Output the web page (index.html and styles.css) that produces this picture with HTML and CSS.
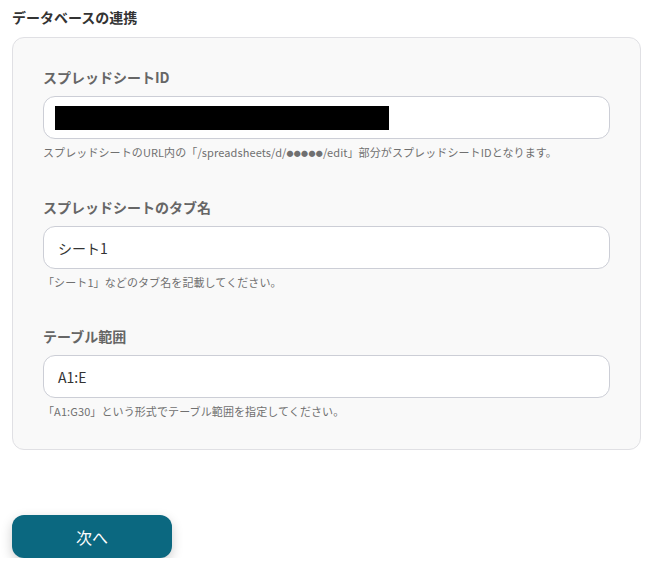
FILE: index.html
```html
<!DOCTYPE html>
<html lang="ja">
<head>
<meta charset="utf-8">
<link rel="stylesheet" href="styles.css">
</head>
<body>
<div class="page">
  <h2 class="title">データベースの連携</h2>
  <div class="card">
    <div class="field">
      <div class="label">スプレッドシートID</div>
      <div class="input"><span class="redact"></span></div>
      <div class="help">スプレッドシートのURL内の「/spreadsheets/d/<span class="dots">●●●●●</span>/edit」部分がスプレッドシートIDとなります。</div>
    </div>
    <div class="field">
      <div class="label">スプレッドシートのタブ名</div>
      <div class="input">シート1</div>
      <div class="help">「シート1」などのタブ名を記載してください。</div>
    </div>
    <div class="field">
      <div class="label">テーブル範囲</div>
      <div class="input">A1:E</div>
      <div class="help">「A1:G30」という形式でテーブル範囲を指定してください。</div>
    </div>
  </div>
  <button class="next">次へ</button>
</div>
</body>
</html>
```

FILE: styles.css
```css
* { box-sizing: border-box; }
html, body { margin: 0; padding: 0; background: #fff; }
body { font-family: "Noto Sans CJK JP", "Noto Sans", sans-serif; color: #333; }
.page { padding: 7px 13px 0 12px; }
.title {
  margin: 0 0 9px 0;
  font-size: 14px;
  line-height: 21px;
  font-weight: 700;
  color: #333;
}
.card {
  background: #f9f9f9;
  border: 1px solid #e0e0e4;
  border-radius: 12px;
  padding: 27px 30px 30px 30px;
  display: flex;
  flex-direction: column;
  gap: 34px;
}
.field { display: flex; flex-direction: column; }
.label {
  font-size: 14px;
  line-height: 24px;
  font-weight: 700;
  color: #666;
  margin-bottom: 7px;
}
.input {
  height: 43px;
  background: #fff;
  border: 1px solid #ccced6;
  border-radius: 12px;
  padding: 0 14px;
  display: flex;
  align-items: center;
  font-size: 14px;
  color: #333;
}
.redact {
  display: block;
  width: 334px;
  height: 24px;
  background: #000;
  margin-left: -3px;
}
.help {
  margin-top: 5px;
  font-size: 11px;
  line-height: 16px;
  color: #707070;
  letter-spacing: 0.1px;
}
.dots {
  font-size: 7px;
  letter-spacing: 0.3px;
  vertical-align: 1px;
}
.next {
  margin-top: 65px;
  width: 160px;
  height: 43px;
  border: none;
  border-radius: 12px;
  background: #0b6880;
  color: #fff;
  font-family: "Noto Sans CJK JP", sans-serif;
  font-size: 16px;
  box-shadow: 0 4px 12px rgba(0,0,0,0.2);
  display: block;
}
```
